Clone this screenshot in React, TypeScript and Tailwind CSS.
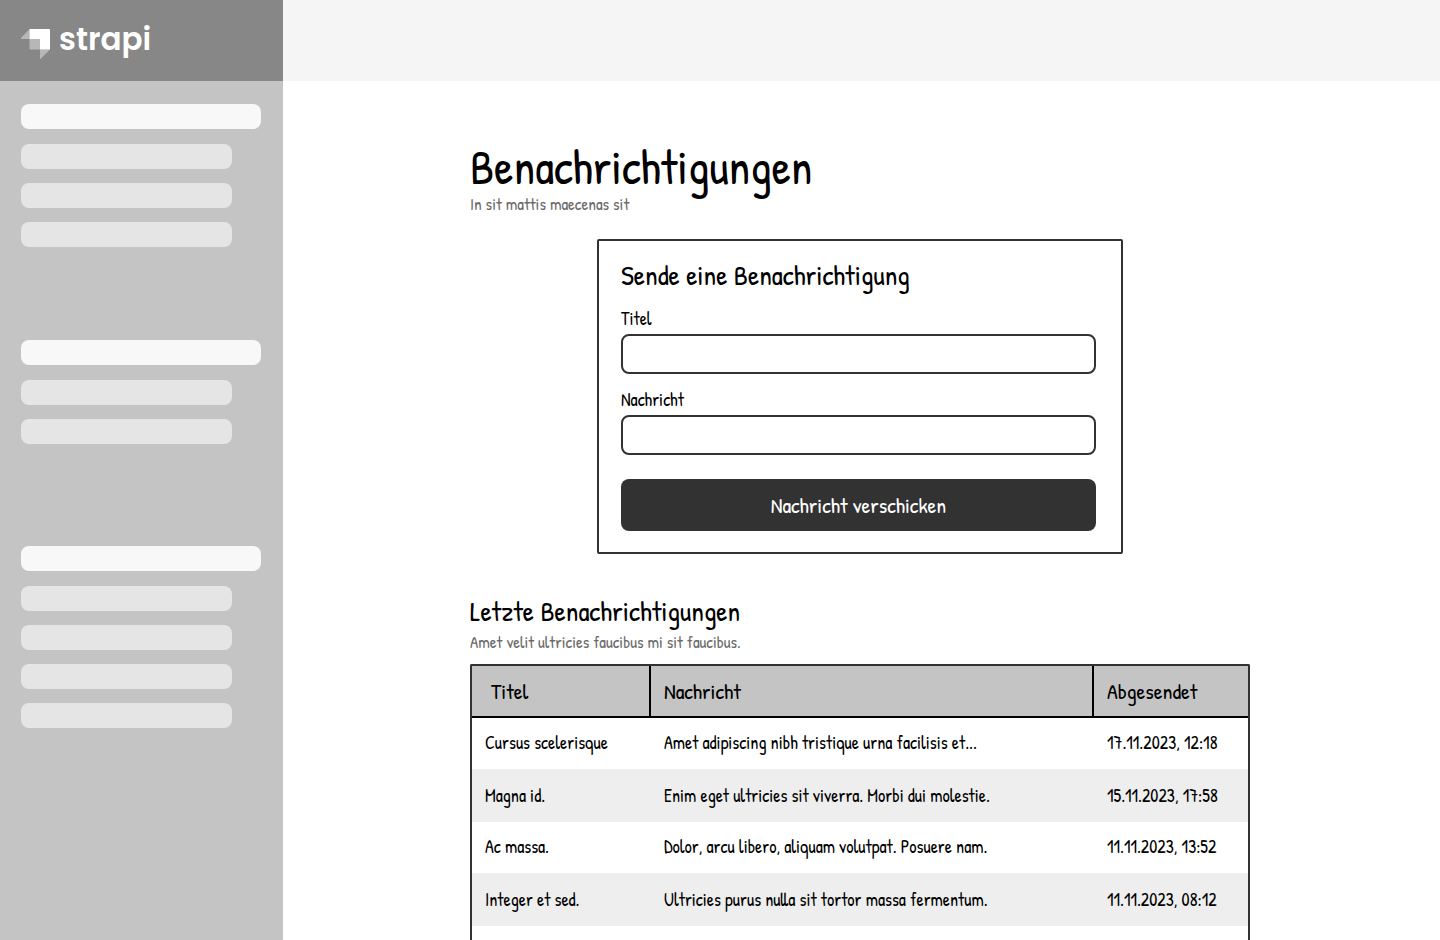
import React from "react";

const menuGroups = [
  { name: "primary", items: 3, spacing: "mt-[23px]" },
  { name: "secondary", items: 2, spacing: "mt-[93px]" },
  { name: "settings", items: 4, spacing: "mt-[102px]" },
];

const notifications = [
  { title: "Cursus scelerisque", message: "Amet adipiscing nibh tristique urna facilisis et...", sent: "17.11.2023, 12:18" },
  { title: "Magna id.", message: "Enim eget ultricies sit viverra. Morbi dui molestie.", sent: "15.11.2023, 17:58" },
  { title: "Ac massa.", message: "Dolor, arcu libero, aliquam volutpat. Posuere nam.", sent: "11.11.2023, 13:52" },
  { title: "Integer et sed.", message: "Ultricies purus nulla sit tortor massa fermentum.", sent: "11.11.2023, 08:12" },
];

function Logo() {
  return (
    <a href="#" className="flex items-start gap-[9px] text-white">
      <svg className="mt-2 h-[30px] w-[29px]" viewBox="0 0 29 30" fill="currentColor" aria-hidden="true">
        <path d="M8.5 0H28Q29 0 29 1V20.500H19V10H8.500Z" />
        <path opacity=".4" d="M8.500 0V10H0V9Z" />
        <path opacity=".4" d="M8.500 10H19V20.500H9.500Q8.500 20.500 8.500 19.500Z" />
        <path opacity=".4" d="M19 20.500H29L19.500 30H19Z" />
      </svg>
      <span className="font-[Poppins,Outfit,Quicksand,Lato,sans-serif] text-[31px] leading-9 font-semibold">strapi</span>
    </a>
  );
}

function Sidebar() {
  return (
    <aside className="w-[283px] shrink-0 bg-[#c4c4c4]">
      <div className="h-[81px] bg-[#878787] px-[21px] pt-[21px]">
        <Logo />
      </div>
      <nav className="px-[21px]">
        {menuGroups.map((group) => (
          <div key={group.name} className={group.spacing}>
            <div className="mb-[15px] h-[25px] w-[240px] rounded-lg bg-[#f8f8f8]" />
            <div className="flex flex-col gap-[14px]">
              {Array.from({ length: group.items }, (_, i) => (
                <div key={i} className="h-[25px] w-[211px] rounded-lg bg-[#e5e5e5]" />
              ))}
            </div>
          </div>
        ))}
      </nav>
    </aside>
  );
}

function Field({ id, label }: { id: string; label: string }) {
  return (
    <div>
      <label htmlFor={id} className="block text-lg leading-[26px]">{label}</label>
      <input id={id} type="text" className="mt-[2px] block h-10 w-full rounded-lg border-2 border-[#323232] bg-white px-3 text-lg outline-none" />
    </div>
  );
}

function NotificationForm() {
  return (
    <form
      onSubmit={(e) => e.preventDefault()}
      className="mx-auto mt-6 w-full max-w-[526px] rounded-xs border-2 border-[#323232] pt-4 pr-[25px] pb-[21px] pl-[22px]"
    >
      <h2 className="text-[28px] leading-9">Sende eine Benachrichtigung</h2>
      <div className="mt-[13px] flex flex-col gap-[13px]">
        <Field id="title" label="Titel" />
        <Field id="message" label="Nachricht" />
      </div>
      <button type="submit" className="mt-6 h-[52px] w-full rounded-lg bg-[#323232] text-[22px] text-white">
        Nachricht verschicken
      </button>
    </form>
  );
}

function NotificationTable() {
  return (
    <div className="mt-2 flex-1 rounded-t-xs border-2 border-b-0 border-[#323232]">
      <table className="w-full table-fixed border-separate border-spacing-0 text-left">
        <colgroup>
          <col className="w-[179px]" />
          <col />
          <col className="w-[154px]" />
        </colgroup>
        <thead className="bg-[#c4c4c4] text-[22px] leading-8">
          <tr className="h-[52px]">
            <th scope="col" className="border-r-2 border-b-2 border-black p-0 pl-[19px] font-normal">Titel</th>
            <th scope="col" className="border-r-2 border-b-2 border-black p-0 pl-[13px] font-normal">Nachricht</th>
            <th scope="col" className="border-b-2 border-black p-0 pl-[13px] font-normal">Abgesendet</th>
          </tr>
        </thead>
        <tbody className="text-lg leading-6">
          {notifications.map((n) => (
            <tr key={n.message} className="h-[51px] odd:*:pb-[2px] even:h-[53px] even:bg-[#eeeeee]">
              <td className="pl-[13px]">{n.title}</td>
              <td className="pl-[13px]">{n.message}</td>
              <td className="pl-[13px]">{n.sent}</td>
            </tr>
          ))}
        </tbody>
      </table>
    </div>
  );
}

export default function App() {
  return (
    <div className="flex min-h-screen bg-white font-['Patrick_Hand','Liberation_Sans_Narrow',Lato,sans-serif] text-black">
      <Sidebar />
      <div className="flex min-w-0 flex-1 flex-col">
        <header className="h-[81px] shrink-0 bg-[#f5f5f5]" />
        <main className="flex flex-1 flex-col pr-[3px]">
          <div className="mx-auto flex w-full max-w-[780px] flex-1 flex-col pt-[59px]">
            <h1 className="text-5xl leading-[53px]">Benachrichtigungen</h1>
            <p className="text-[17px] leading-[22px] text-[#6b6b6b]">In sit mattis maecenas sit</p>
            <NotificationForm />
            <h2 className="mt-[39px] text-[28px] leading-9">Letzte Benachrichtigungen</h2>
            <p className="mt-px mb-[2px] text-[17px] leading-6 text-[#6b6b6b]">Amet velit ultricies faucibus mi sit faucibus.</p>
            <NotificationTable />
          </div>
        </main>
      </div>
    </div>
  );
}
